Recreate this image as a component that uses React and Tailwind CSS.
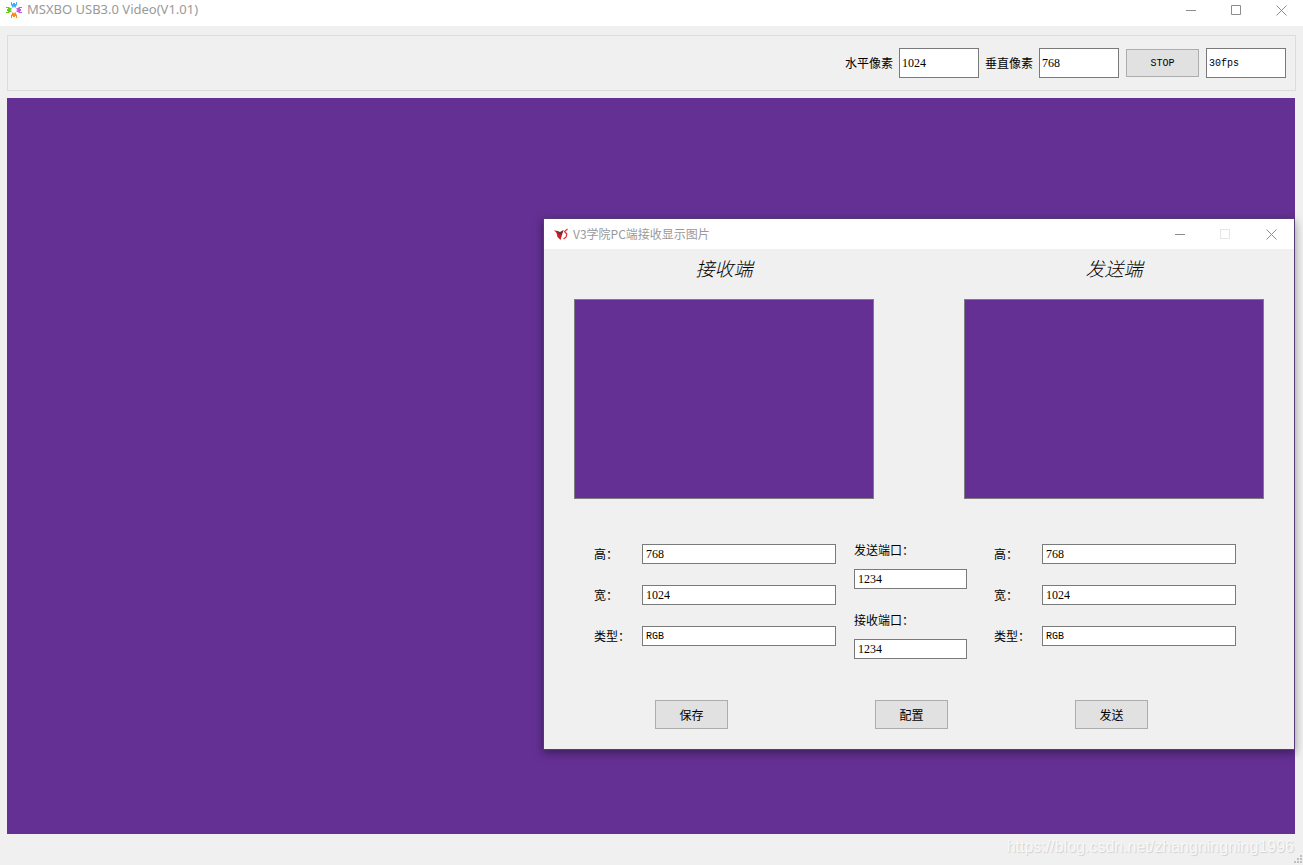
import React from 'react';
import clsx from 'clsx';

const cjk = "font-['Noto_Sans_CJK_SC',sans-serif]";
const digits = "font-['Liberation_Serif','Noto_Sans_CJK_SC',serif] text-[12px]";
const mono = "font-['Liberation_Mono','Noto_Sans_CJK_SC',monospace] text-[10px]";

const AppLogo = () => (
  <svg width="16" height="16" viewBox="0 0 16 16" aria-hidden="true">
    {[
      ['#45aef5', 0],
      ['#c657e0', 90],
      ['#ff8a14', 180],
      ['#62cc1b', 270],
    ].map(([color, angle]) => (
      <path
        key={angle}
        fill={color}
        transform={`rotate(${angle} 8 8)`}
        d="M5 0h1v2h1V1h2v1h1V0h1v3l-1 1v1.500H8.500V4.700h-1v.8H6V4L5 3z"
      />
    ))}
  </svg>
);

const V3Logo = () => (
  <svg width="16" height="16" viewBox="0 0 16 16" aria-hidden="true">
    <path d="M1 4l4 1.500 2 1.500 3.500-3-1.500 5-1.500 5L4.500 11 3.500 7z" fill="#d8191f" />
    <path d="M3.500 4.500L7 6l3.500-2-1.800 4.200L7 8.500 5 7z" fill="#5a3a3a" />
    <path d="M14.500 3l-3 2.500 2.300 2.500-.6 3-2.700 2" fill="none" stroke="#e0393c" strokeWidth="1.3" />
  </svg>
);

const WindowControls = ({ maximizeDisabled, className }) => (
  <div className={clsx('flex text-[#8c8c8c]', className)}>
    <button type="button" aria-label="Minimize" className="flex h-5 w-[46px] items-center justify-center">
      <svg width="11" height="11" viewBox="0 0 11 11" stroke="currentColor">
        <path d="M0 5.5h10" />
      </svg>
    </button>
    <button
      type="button"
      aria-label="Maximize"
      disabled={maximizeDisabled}
      className={clsx('flex h-5 w-[45px] items-center justify-center', maximizeDisabled && 'text-[#e5e5e5]')}
    >
      <svg width="11" height="11" viewBox="0 0 11 11" fill="none" stroke="currentColor">
        <path d="M.5.5h9v9h-9z" />
      </svg>
    </button>
    <button type="button" aria-label="Close" className="flex h-5 w-[46px] items-center justify-center">
      <svg width="11" height="11" viewBox="0 0 11 11" stroke="currentColor">
        <path d="M.5.5l10 10M10.500.5l-10 10" />
      </svg>
    </button>
  </div>
);

const ToolbarField = ({ id, label, value }) => (
  <>
    <label htmlFor={id} className="text-[12px]">{label}</label>
    <input
      id={id}
      defaultValue={value}
      className={clsx('h-[30px] w-20 border border-[#7a7a7a] bg-white px-0.5', digits)}
    />
  </>
);

const PushButton = ({ children, className }) => (
  <button type="button" className={clsx('w-[73px] border border-[#adadad] bg-[#e1e1e1]', className)}>
    {children}
  </button>
);

const ImageFields = ({ side }) => (
  <div className="flex flex-col gap-[21px] pt-1">
    {[
      ['height', '高：', '768', digits],
      ['width', '宽：', '1024', digits],
      ['type', '类型：', 'RGB', mono],
    ].map(([name, label, value, font]) => (
      <div key={name} className="flex h-5 items-center">
        <label htmlFor={`${side}-${name}`} className="w-12">{label}</label>
        <input
          id={`${side}-${name}`}
          defaultValue={value}
          className={clsx('h-5 w-[194px] border border-[#7a7a7a] bg-white px-[3px]', font)}
        />
      </div>
    ))}
  </div>
);

const PortField = ({ id, label, value }) => (
  <div className="flex flex-col gap-[9px]">
    <label htmlFor={id} className="h-5 leading-5">{label}</label>
    <input
      id={id}
      defaultValue={value}
      className={clsx('h-5 w-[113px] border border-[#7a7a7a] bg-white px-[3px]', digits)}
    />
  </div>
);

const Preview = ({ title }) => (
  <section>
    <h2 className="h-[50px] text-center text-[19px] leading-[38px] font-light italic">{title}</h2>
    <div className="h-[200px] w-[300px] border border-[#7d7d7d] bg-[#643094]" />
  </section>
);

const TransferDialog = () => (
  <div
    role="dialog"
    aria-labelledby="dialog-title"
    className="absolute top-[120px] right-0 w-[752px] border border-[#563a78] bg-[#f0f0f0] text-[12px] shadow-[0_3px_9px_rgba(0,0,0,0.4)]"
  >
    <div className="flex h-[30px] items-center justify-between bg-white pl-[9px]">
      <div className="flex items-center gap-1">
        <V3Logo />
        <h1 id="dialog-title" className="text-[#999999]">V3学院PC端接收显示图片</h1>
      </div>
      <WindowControls maximizeDisabled />
    </div>
    <div className="flex justify-between px-[30px]">
      <Preview title="接收端" />
      <Preview title="发送端" />
    </div>
    <div className="mt-[41px] flex pl-[50px]">
      <ImageFields side="receive" />
      <div className="mr-[27px] ml-[18px] flex flex-col gap-[21px]">
        <PortField id="send-port" label="发送端口：" value="1234" />
        <PortField id="receive-port" label="接收端口：" value="1234" />
      </div>
      <ImageFields side="send" />
    </div>
    <div className="mt-[41px] flex pb-5 pl-[111px]">
      <PushButton className="h-[29px]">保存</PushButton>
      <PushButton className="ml-[147px] h-[29px]">配置</PushButton>
      <PushButton className="ml-[127px] h-[29px]">发送</PushButton>
    </div>
  </div>
);

export default function App() {
  return (
    <div className={clsx('flex min-h-screen flex-col bg-[#f0f0f0] text-black', cjk)}>
      <header className="flex h-[26px] items-start justify-between bg-white pl-1.5">
        <div className="flex h-5 items-center gap-[5px]">
          <AppLogo />
          <span className="font-['Noto_Sans',sans-serif] text-[13px] text-[#999999]">
            MSXBO USB3.0 Video(V1.01)
          </span>
        </div>
        <WindowControls className="[&>:last-child]:w-[44px]" />
      </header>

      <div className="mx-[7px] mt-[9px] flex h-14 items-center justify-end gap-[7px] border border-[#dcdcdc] pr-[9px]">
        <div className="flex items-center gap-1.5">
          <ToolbarField id="h-pixels" label="水平像素" value="1024" />
          <ToolbarField id="v-pixels" label="垂直像素" value="768" />
        </div>
        <PushButton className={clsx('h-7', mono)}>STOP</PushButton>
        <input
          aria-label="fps"
          defaultValue="30fps"
          className={clsx('h-[30px] w-20 border border-[#7a7a7a] bg-white px-0.5', mono)}
        />
      </div>

      <main className="relative mt-[7px] mr-2 ml-[7px] min-h-[660px] flex-1 bg-[#643094]">
        <TransferDialog />
      </main>

      <footer className="relative flex h-[31px] justify-end pr-[9px]">
        <span className="font-['Liberation_Sans',sans-serif] text-[16px] leading-[26px] text-[#f8f8f8] [text-shadow:1px_1px_1px_#d0d0d0]">
          https://blog.csdn.net/zhangningning1996
        </span>
        <svg className="absolute right-0 bottom-0.5" width="9" height="8" viewBox="0 0 9 8" fill="#bfbfbf" aria-hidden="true">
          <path d="M6 0h2v2H6zM3 3h2v2H3zM6 3h2v2H6zM0 6h2v2H0zM3 6h2v2H3zM6 6h2v2H6z" />
        </svg>
      </footer>
    </div>
  );
}
